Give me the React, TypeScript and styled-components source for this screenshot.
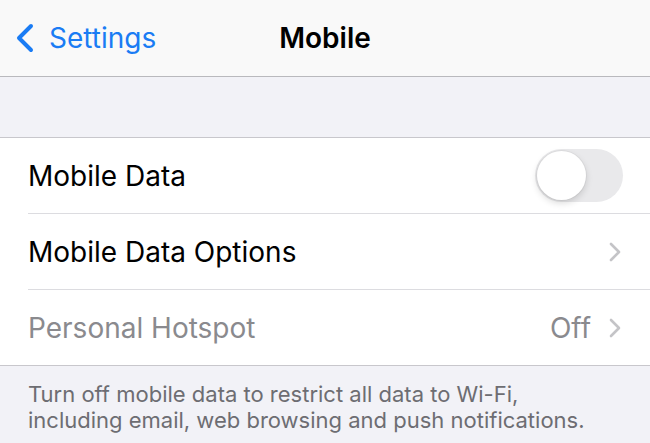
import React from 'react';
import styled, {createGlobalStyle} from 'styled-components';

const GlobalStyle = createGlobalStyle`
    body {
        margin: 0;
        background: #f2f2f7;
        font-family: Inter, "Noto Sans", "Liberation Sans", sans-serif;
        -webkit-font-smoothing: antialiased;
    }
`

const Page = styled.div`
    width: 650px;
    height: 443px;
    overflow: hidden;
    background: #f2f2f7;
`

const NavBar = styled.div`
    height: 76px;
    display: grid;
    grid-template-columns: 1fr auto 1fr;
    align-items: center;
    background: #f9f9f9;
    border-bottom: 1px solid #b9b9bd;
`

const BackButton = styled.div`
    display: flex;
    align-items: center;
    gap: 14px;
    padding-left: 15px;
    color: #1a7cf4;
    font-size: 28px;
`

const Title = styled.div`
    font-size: 28px;
    font-weight: 600;
    color: #000;
`

const Spacer = styled.div`
    height: 60px;
`

const Group = styled.div`
    background: #fff;
    border-top: 1px solid #c8c7cc;
    border-bottom: 1px solid #c8c7cc;
`

const Row = styled.div<{ $last?: boolean }>`
    height: 75px;
    margin-left: 28px;
    padding-right: 29px;
    display: flex;
    align-items: center;
    justify-content: space-between;
    border-bottom: ${p => (p.$last ? 'none' : '1px solid #dcdce0')};
`

const Label = styled.span<{ $disabled?: boolean }>`
    font-size: 28px;
    color: ${p => (p.$disabled ? '#8a8a8e' : '#000')};
`

const Accessory = styled.div`
    display: flex;
    align-items: center;
    gap: 18px;
`

const Value = styled.span`
    font-size: 28px;
    color: #8a8a8e;
`

const Toggle = styled.div`
    width: 88px;
    height: 53px;
    border-radius: 27px;
    background: #e9e9eb;
    position: relative;
    margin-right: -2px;
`

const Knob = styled.div`
    position: absolute;
    top: 2px;
    left: 2px;
    width: 49px;
    height: 49px;
    border-radius: 50%;
    background: #fff;
    box-shadow: 0 3px 7px rgba(0, 0, 0, 0.15), 0 0 0 1px rgba(0, 0, 0, 0.04);
`

const Footer = styled.p`
    margin: 0;
    padding: 15px 28px 0;
    font-size: 22px;
    line-height: 26px;
    color: #6d6d72;
`

const Chevron = () => (
    <svg width="12" height="20" viewBox="0 0 12 20">
        <path d="M2 2l8 8-8 8" fill="none" stroke="#c4c4c7" strokeWidth="2.6" strokeLinecap="round"
              strokeLinejoin="round"/>
    </svg>
)

const BackChevron = () => (
    <svg width="20" height="30" viewBox="0 0 20 30">
        <path d="M16 3L4 15l12 12" fill="none" stroke="#1a7cf4" strokeWidth="4" strokeLinecap="round"
              strokeLinejoin="round"/>
    </svg>
)

export default function App() {
    return (
        <Page>
            <GlobalStyle/>
            <NavBar>
                <BackButton>
                    <BackChevron/>
                    Settings
                </BackButton>
                <Title>Mobile</Title>
                <div/>
            </NavBar>
            <Spacer/>
            <Group>
                <Row>
                    <Label>Mobile Data</Label>
                    <Toggle><Knob/></Toggle>
                </Row>
                <Row>
                    <Label>Mobile Data Options</Label>
                    <Chevron/>
                </Row>
                <Row $last>
                    <Label $disabled>Personal Hotspot</Label>
                    <Accessory>
                        <Value>Off</Value>
                        <Chevron/>
                    </Accessory>
                </Row>
            </Group>
            <Footer>
                Turn off mobile data to restrict all data to Wi-Fi,<br/>
                including email, web browsing and push notifications.
            </Footer>
        </Page>
    );
}
